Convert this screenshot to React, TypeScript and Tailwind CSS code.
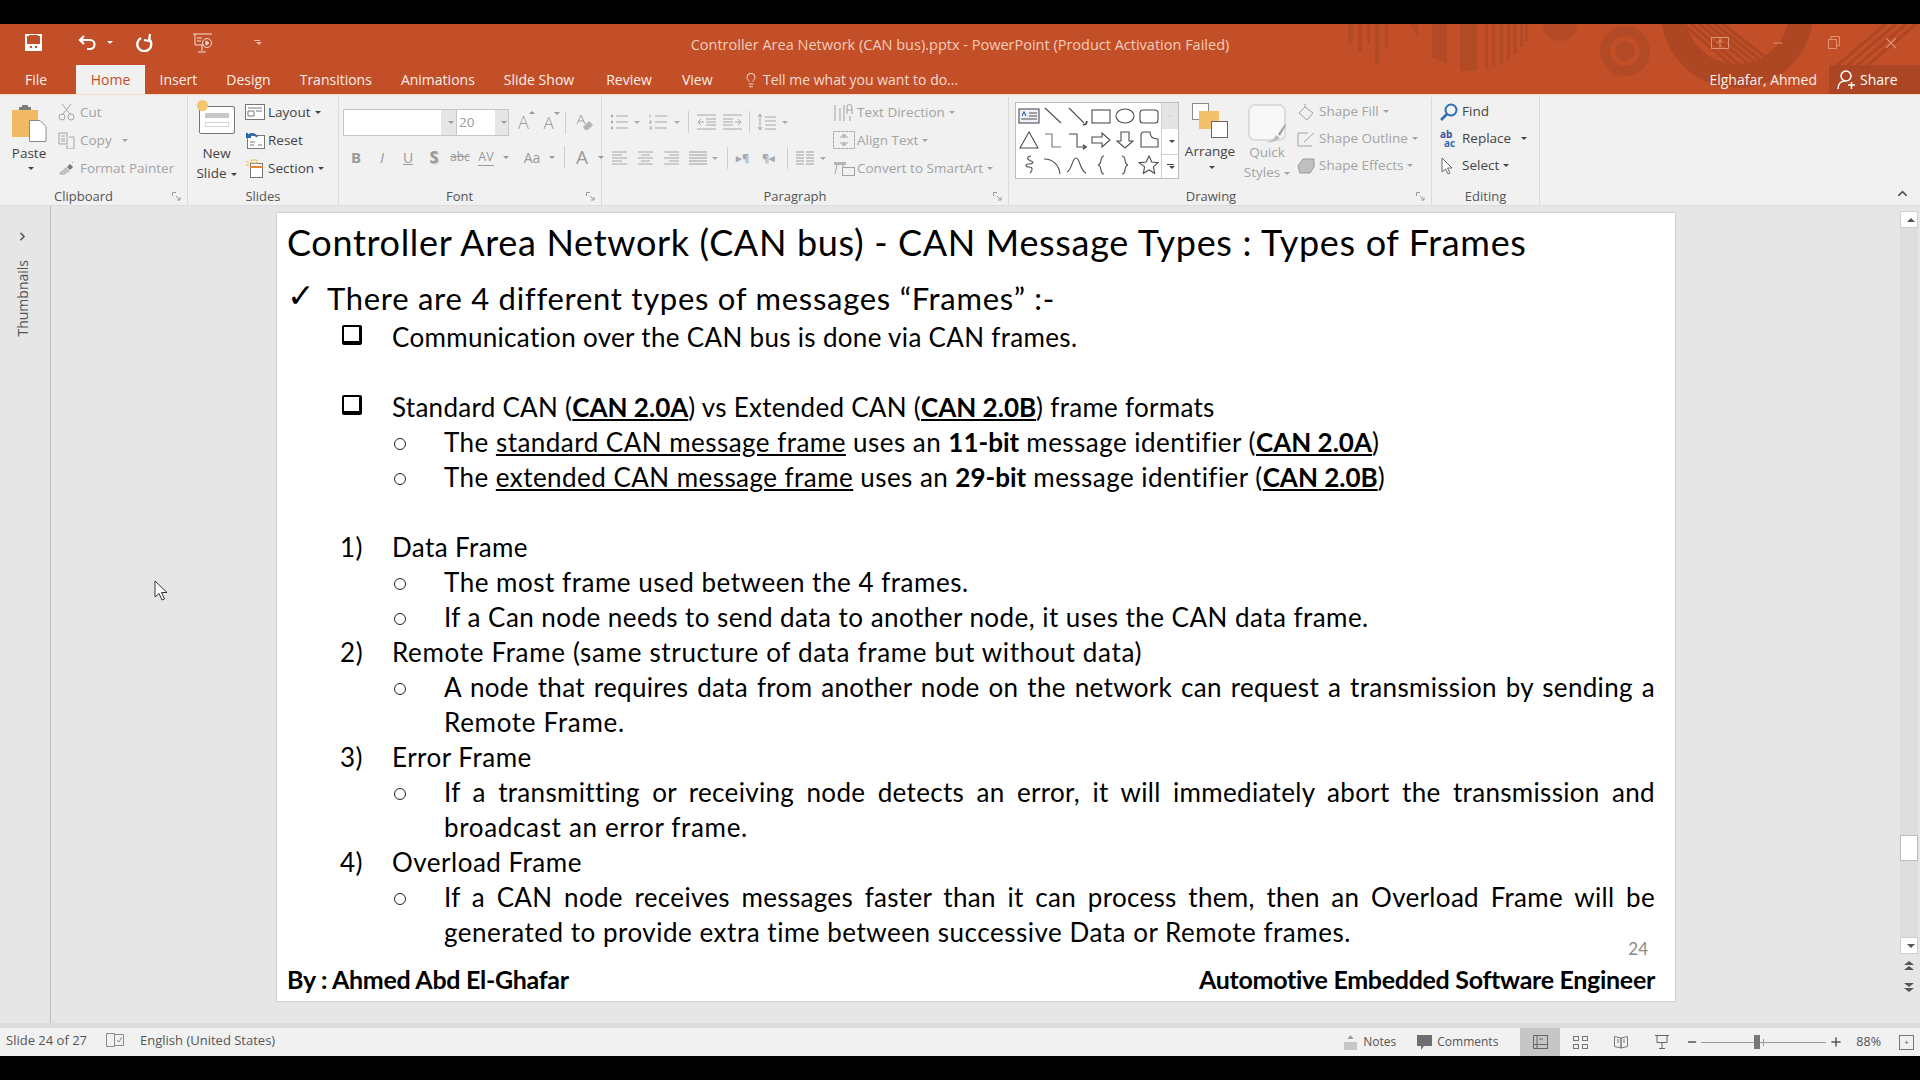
import type { ReactNode } from "react";
import { ChevronRight, ChevronUp, Lightbulb, Minus, Plus, X } from "lucide-react";

const tabs = [
  { name: "Insert", className: "" },
  { name: "Design", className: "" },
  { name: "Transitions", className: "" },
  { name: "Animations", className: "" },
  { name: "Slide Show", className: "" },
  { name: "Review", className: "ml-[3px]" },
  { name: "View", className: "ml-[1px]" },
];

function Caret({ className = "" }: { className?: string }) {
  return <span className={`ml-1 inline-block h-0 w-0 border-x-[3px] border-t-[3px] border-x-transparent border-t-current align-middle ${className}`} />;
}

function Svg({ w, h, children, className = "" }: { w: number; h: number; children: ReactNode; className?: string }) {
  return (
    <svg width={w} height={h} viewBox={`0 0 ${w} ${h}`} className={`shrink-0 ${className}`} fill="none" stroke="currentColor" strokeWidth="1">
      {children}
    </svg>
  );
}

function RibbonRow({ icon, label, caret, dim, compact, slot = "w-[22px]", caretClass }: { icon: ReactNode; label: string; caret?: boolean; dim?: boolean; compact?: boolean; slot?: string; caretClass?: string }) {
  return (
    <div className={`flex items-center whitespace-nowrap ${compact ? "h-[27px]" : "h-[28px]"} ${dim ? "text-[#a3a3a3]" : "text-[#444444]"}`}>
      <span className={`flex shrink-0 items-center ${slot}`}>{icon}</span>
      {label}
      {caret && <Caret className={caretClass} />}
    </div>
  );
}

function Launcher() {
  return (
    <svg width="9" height="9" viewBox="0 0 9 9" className="absolute bottom-[4px] right-[6px] text-[#9a9a9a]" fill="none" stroke="currentColor">
      <path d="M.5 4V.5H4M4 4l4 4M8 5v3H5" />
    </svg>
  );
}

function Group({ w, label, children, launcher, labelPad = "" }: { w: string; label: string; children: ReactNode; launcher?: boolean; labelPad?: string }) {
  return (
    <div className={`relative flex h-[108px] shrink-0 flex-col border-r border-[#dadada] ${w}`}>
      <div className="flex min-h-0 flex-1">{children}</div>
      <div className={`text-center text-[13px] leading-[18px] text-[#555555] ${labelPad}`}>{label}</div>
      {launcher && <Launcher />}
    </div>
  );
}

function Sep({ className = "" }: { className?: string }) {
  return <span className={`h-[22px] border-l border-[#cfcfcf] ${className}`} />;
}

function ListIcon({ numbered }: { numbered?: boolean }) {
  return (
    <Svg w={18} h={16} className="text-[#a8a8a8]">
      <path d="M6 2h12M6 8h12M6 14h12" />
      {numbered ? <path d="M1 .5v3M.5 7h2l-2 2h2M.5 13h2v2h-2" /> : <path d="M1 2h2M1 8h2M1 14h2" strokeWidth="2.4" />}
    </Svg>
  );
}

function IndentIcon({ flip }: { flip?: boolean }) {
  return (
    <Svg w={19} h={16} className={`text-[#a8a8a8] ${flip ? "-scale-x-100" : ""}`}>
      <path d="M0 1h19M9 5h10M9 8h10M9 11h10M0 15h19M7 8H1M4 5L1 8l3 3" />
    </Svg>
  );
}

function AlignIcon({ kind }: { kind: "left" | "center" | "right" | "justify" | "columns" }) {
  const rows = [2, 5, 8, 11, 14];
  return (
    <Svg w={kind === "justify" || kind === "columns" ? 18 : 15} h={16} className={kind === "justify" || kind === "columns" ? "text-[#9c9c9c]" : "text-[#cccccc]"}>
      {kind === "columns" && rows.map((y) => <path key={y} d={`M0 ${y}h8M10 ${y}h8`} />)}
      {kind === "justify" && rows.map((y) => <path key={y} d={`M0 ${y}h18`} />)}
      {kind === "left" && rows.map((y, i) => <path key={y} strokeWidth="2" d={`M0 ${y}h${i % 2 ? 10 : 15}`} />)}
      {kind === "center" && rows.map((y, i) => <path key={y} strokeWidth="2" d={i % 2 ? `M3 ${y}h9` : `M0 ${y}h15`} />)}
      {kind === "right" && rows.map((y, i) => <path key={y} strokeWidth="2" d={i % 2 ? `M5 ${y}h10` : `M0 ${y}h15`} />)}
    </Svg>
  );
}

function GrowA({ down, size }: { down?: boolean; size: number }) {
  return (
    <span className="relative w-[25px] text-center font-light text-[#9a9a9a]" style={{ fontSize: size }}>
      A
      <Caret className={`absolute right-[1px] top-[2px] ml-0 ${down ? "" : "rotate-180"}`} />
    </span>
  );
}

const gallery = [
  <g key="1"><rect x="1" y="5" width="20" height="14" fill="#eef2f8" /><path d="M11 9h8M11 12h8M3 15h16" /><path d="M4 12l2-4 2 4" stroke="#2a5fb0" /></g>,
  <path key="2" d="M3 4l16 15" />,
  <g key="3"><path d="M3 4l15 15" /><path d="M17 21l3-1 1-3" strokeWidth="1.8" /></g>,
  <rect key="4" x="2" y="6" width="18" height="13" />,
  <ellipse key="5" cx="11" cy="12" rx="9" ry="7" />,
  <rect key="6" x="2" y="6" width="18" height="13" rx="3" />,
  <path key="7" d="M11 4l9 16H2z" />,
  <path key="8" d="M3 6h7v13h9" stroke="#777" />,
  <g key="9"><path d="M3 6h8v13h7" /><path d="M17 17l3 2-3 2" strokeWidth="1.6" /></g>,
  <path key="10" d="M2 9h10V5l8 7-8 7v-4H2z" />,
  <path key="11" d="M7 4h8v9h4l-8 7-8-7h4z" />,
  <path key="12" d="M3 7c0-2 1-3 3-3h6c0 5 3 7 8 7v8H3z" />,
  <path key="13" d="M13 3c-6 1-3 4 0 5s2 3-2 3-4 3 0 3 4 3 1 6" />,
  <path key="14" d="M2 6c9 0 15 6 16 15" />,
  <path key="15" d="M1 19C6 17 6 5 10 5s4 13 10 15" />,
  <path key="16" d="M14 3c-5 0-1 8-6 9 5 1 1 9 6 9" />,
  <path key="17" d="M8 3c5 0 1 8 6 9-5 1-1 9-6 9" />,
  <path key="18" d="M11 3l2.800 6 6.200.7-4.600 4.200 1.300 6.400-5.700-3.300-5.700 3.300 1.300-6.400L1 9.700 8.200 9z" />,
];

function Ribbon() {
  return (
    <div className="relative flex h-[112px] shrink-0 border-t border-[#fbd9c9] bg-[#f1f1f1] pt-[2px] text-[13.5px] shadow-[inset_0_-1px_0_#dddddd]">
      <Group w="w-[188px]" label="Clipboard" launcher labelPad="pr-[20px]">
        <div className="flex w-[58px] flex-col items-center text-[#444444]">
          <Svg w={36} h={37} className="mt-[8px]">
            <path d="M1 5h26v27H1z" fill="#f2b965" stroke="none" />
            <path d="M8 5h12V2h-3V0h-6v2H8z" fill="#7d7d7d" stroke="none" />
            <path d="M18.500 15.500H29l6 6v15H18.500z" fill="#fff" stroke="#8a8a8a" />
          </Svg>
          <span className="mt-[2px] leading-[18px]">Paste</span>
          <Caret className="ml-0 mt-[5px]" />
        </div>
        <div className="pt-[1px]">
          <RibbonRow dim label="Cut" icon={
            <Svg w={17} h={18}><circle cx="4" cy="14" r="3" /><circle cx="13" cy="14" r="3" /><path d="M5 11L13 1M12 11L4 1" /></Svg>
          } />
          <RibbonRow dim caret caretClass="ml-[10px]" label="Copy" icon={
            <Svg w={17} h={18}><path d="M1 2h8v11H1zM3 5h4M3 8h4M3 10h4M11 6h5v12h-7v-4" /></Svg>
          } />
          <RibbonRow dim label="Format Painter" icon={
            <Svg w={17} h={14}><path d="M1 12l7-6 4 4-6 4H2z" fill="#c2c2c2" stroke="none" /><path d="M9 6l3-3 3 3-3 3z" fill="#777" stroke="none" /><path d="M14 1l1 1" /></Svg>
          } />
        </div>
      </Group>

      <Group w="w-[151px]" label="Slides">
        <div className="flex w-[57px] flex-col items-center text-[#444444]">
          <span className="relative mt-[9px] h-[28px] w-[36px] shrink-0 rounded-[2px] border border-[#777777] bg-white">
            <span className="absolute left-[5px] right-[5px] top-[6px] h-[5px] bg-[#c8c8c8]" />
            <span className="absolute left-[5px] right-[5px] top-[15px] h-[5px] border border-[#d6d6d6]" />
            <span className="absolute -left-[3px] -top-[7px] h-[11px] w-[11px] rounded-full bg-[#f4c66e]" />
          </span>
          <span className="mt-[9px] leading-[20px]">New</span>
          <span className="whitespace-nowrap leading-[20px]">Slide<Caret /></span>
        </div>
        <div className="pt-[1px]">
          <RibbonRow caret slot="w-[23px]" label="Layout" icon={
            <Svg w={20} h={16} className="text-[#777777]"><rect x=".5" y=".5" width="19" height="15" fill="#fff" /><path d="M3 4h14M3 7h6v5H3zM11 7h6" /></Svg>
          } />
          <RibbonRow slot="w-[23px]" label="Reset" icon={
            <Svg w={20} h={17} className="text-[#777777]"><rect x="2.500" y="3.500" width="17" height="13" fill="#fff" /><path d="M5 10h5M5 13h4M13 13h4" /><path d="M2 5c3-4 7-4 10 0M2 1v4h4" stroke="#2565ae" strokeWidth="2" /></Svg>
          } />
          <RibbonRow caret slot="w-[23px]" label="Section" icon={
            <Svg w={20} h={19}><rect x="5.500" y="4.500" width="12" height="14" fill="#fff" stroke="#777" /><path d="M5 8h13" stroke="#e0843b" strokeWidth="2" /><path d="M6 1h6v3H6zM1 2l3 2M1 6h3" stroke="#f0b656" /></Svg>
          } />
        </div>
      </Group>

      <Group w="w-[263px]" label="Font" launcher labelPad="pr-[21px]">
        <div className="flex flex-col pl-[4px] pt-[12px]">
          <div className="flex items-center text-[#9a9a9a]">
            <div className="flex h-[27px] w-[113px] border border-r-0 border-[#c6c6c6] bg-white">
              <span className="flex-1" />
              <span className="flex w-[15px] items-center justify-center bg-[#e6e6e6]"><Caret className="ml-0" /></span>
            </div>
            <div className="flex h-[27px] w-[53px] items-center border border-[#c6c6c6] bg-white pl-[2px]">
              <span className="flex-1">20</span>
              <span className="flex h-full w-[13px] items-center justify-center bg-[#e6e6e6]"><Caret className="ml-0" /></span>
            </div>
            <span className="ml-[2px]" />
            <GrowA size={18} />
            <GrowA size={17} down />
            <Sep className="ml-[4px]" />
            <Svg w={17} h={18} className="ml-[10px] text-[#a3a3a3]">
              <path d="M1 10L5 1l4 9M2.500 7h5" />
              <path d="M7 13l6-6 4 4-5 5H9z" fill="#b5b5b5" stroke="none" />
            </Svg>
          </div>
          <div className="mt-[9px] flex h-[24px] items-center text-[#9a9a9a]">
            <span className="w-[26px] text-center text-[15px] font-bold">B</span>
            <span className="w-[26px] text-center text-[15px] italic">I</span>
            <span className="w-[26px] text-center text-[14px] underline">U</span>
            <span className="w-[26px] text-center text-[16px] font-bold [text-shadow:1px_1px_1px_#bbb]">S</span>
            <span className="w-[26px] text-center text-[12px] line-through">abc</span>
            <span className="w-[26px] text-center text-[12.5px] leading-[14px]"><span className="border-b border-[#9a9a9a]">AV</span></span>
            <Caret className="ml-0 mr-[10px]" />
            <span className="w-[26px] text-center text-[14px]">Aa</span>
            <Caret className="ml-0" />
            <Sep className="ml-[9px]" />
            <span className="ml-[6px] w-[22px] text-center text-[19px] leading-[22px]">A</span>
            <Caret className="ml-[5px]" />
          </div>
        </div>
      </Group>

      <Group w="w-[407px]" label="Paragraph" launcher labelPad="pr-[20px]">
        <div className="flex w-[231px] flex-col pl-[8px] pt-[14px] text-[#a8a8a8]">
          <div className="flex h-[22px] items-center">
            <ListIcon /><Caret className="ml-[6px] mr-[9px]" />
            <ListIcon numbered /><Caret className="ml-[7px] mr-[8px]" />
            <Sep className="mr-[8px]" />
            <IndentIcon />
            <span className="w-[7px]" />
            <IndentIcon flip />
            <Sep className="ml-[7px] mr-[7px]" />
            <Svg w={19} h={18}>
              <path d="M3 1v16M1 4l2-3 2 3M1 14l2 3 2-3M8 4h11M8 8h11M8 12h11M8 16h11" />
            </Svg>
            <Caret className="ml-[6px]" />
          </div>
          <div className="mt-[14px] flex h-[22px] items-center pl-[2px]">
            <AlignIcon kind="left" />
            <span className="w-[11px]" />
            <AlignIcon kind="center" />
            <span className="w-[11px]" />
            <AlignIcon kind="right" />
            <span className="w-[10px]" />
            <AlignIcon kind="justify" />
            <Caret className="ml-[5px] mr-[9px]" />
            <Sep className="mr-[8px]" />
            <span className="w-[26px] text-[11px] font-bold">▸¶</span>
            <span className="w-[25px] text-[11px] font-bold">¶◂</span>
            <Sep className="mr-[8px]" />
            <AlignIcon kind="columns" />
            <Caret className="ml-[6px]" />
          </div>
        </div>
        <div className="pt-[1px]">
          <RibbonRow dim caret slot="w-[24px]" label="Text Direction" icon={
            <Svg w={21} h={20}><path d="M2 3v16M7 6v13M11 3v16M14 12V5a2.500 2.500 0 0 1 5 0v7M14 8h5M17 14v5" /></Svg>
          } />
          <RibbonRow dim caret slot="w-[24px]" label="Align Text" icon={
            <Svg w={22} h={18}><rect x=".5" y=".5" width="21" height="17" strokeDasharray="3 1" /><path d="M7 6h8M7 12h8M11 3v4M11 11v4M9 5l2-2 2 2M9 13l2 2 2-2" /></Svg>
          } />
          <RibbonRow dim caret slot="w-[24px]" label="Convert to SmartArt" icon={
            <Svg w={22} h={16}><path d="M1 2h12v3H1z" fill="#b5b5b5" stroke="none" /><path d="M4 5l-2 9M10 5v3" /><rect x="9.500" y="7.500" width="12" height="8" /></Svg>
          } />
        </div>
      </Group>

      <Group w="w-[423px]" label="Drawing" launcher labelPad="pr-[18px]">
        <div className="ml-[6px] mt-[5px] flex h-[77px] w-[164px] border border-[#bdbdbd] bg-white">
          <div className="grid flex-1 grid-cols-6 grid-rows-3 py-[1px] pl-[1px]">
            {gallery.map((shape, i) => (
              <svg key={i} viewBox="0 0 22 24" className="h-[24px] w-[24px]" fill="none" stroke="#4d4d4d" strokeWidth="1.100">
                {shape}
              </svg>
            ))}
          </div>
          <div className="flex w-[17px] flex-col border-l border-[#d0d0d0] text-[#444444]">
            <span className="flex h-[27px] items-center justify-center bg-[#e4e4e4] text-[#bdbdbd]"><Minus size={6} /></span>
            <span className="flex h-[25px] items-center justify-center"><Caret className="ml-0" /></span>
            <span className="flex h-[25px] flex-col items-center justify-center border-t border-[#d0d0d0]"><span className="mb-[1px] w-[7px] border-t border-[#444444]" /><Caret className="ml-0" /></span>
          </div>
        </div>
        <div className="flex w-[62px] flex-col items-center text-[#444444]">
          <span className="relative mt-[6px] h-[35px] w-[36px] shrink-0">
            <span className="absolute left-0 top-0 h-[17px] w-[17px] border border-[#8a8a8a] bg-white" />
            <span className="absolute left-[7px] top-[8px] h-[18px] w-[20px] bg-[#f4c16b]" />
            <span className="absolute bottom-0 right-0 h-[17px] w-[17px] border border-[#666666] bg-white" />
          </span>
          <span className="mt-[4px] leading-[18px]">Arrange</span>
          <Caret className="ml-0 mt-[6px]" />
        </div>
        <div className="flex w-[52px] flex-col items-center text-[#a3a3a3]">
          <span className="relative mt-[7px] h-[37px] w-[38px] shrink-0 rounded-[7px] border-2 border-[#dcdcdc] bg-[#f8f8f8]">
            <Svg w={22} h={22} className="absolute -bottom-[4px] -right-[3px] text-[#a9a9a9]">
              <path d="M1 21c6-1 8-3 10-7l4 3c-3 3-8 5-14 4z" fill="#bdbdbd" stroke="none" />
              <path d="M13 13l7-10 1 1-6 11z" fill="#a0a0a0" stroke="none" />
            </Svg>
          </span>
          <span className="mt-[1px] leading-[20px]">Quick</span>
          <span className="whitespace-nowrap leading-[20px]">Styles<Caret /></span>
        </div>
        <div className="pl-[4px] pt-[1px]">
          <RibbonRow dim compact caret label="Shape Fill" icon={
            <Svg w={17} h={18}><path d="M8 4l8 6-6 7-8-7zM8 4V1" /></Svg>
          } />
          <RibbonRow dim compact caret label="Shape Outline" icon={
            <Svg w={18} h={16}><path d="M15 15H1V2h10M7 11l10-9" /></Svg>
          } />
          <RibbonRow dim compact caret label="Shape Effects" icon={
            <Svg w={18} h={16}><path d="M1 8l5-7h11v8l-4 6H3z" fill="#c0c0c0" stroke="#999" /></Svg>
          } />
        </div>
      </Group>

      <Group w="w-[108px]" label="Editing">
        <div className="pl-[8px] pt-[1px]">
          <RibbonRow compact label="Find" icon={
            <Svg w={18} h={18} className="text-[#2a6db5]"><circle cx="11" cy="7" r="5.500" strokeWidth="2" /><path d="M7 11l-6 6" strokeWidth="2.500" /></Svg>
          } />
          <RibbonRow compact label="Replace" caret caretClass="ml-[10px]" icon={
            <span className="text-[10px] font-bold leading-[9px] text-[#3c4f9e]">ab<br /><span className="ml-[4px] text-[#2a6db5]">ac</span></span>
          } />
          <RibbonRow compact label="Select" caret icon={
            <svg width="14" height="18" viewBox="0 0 14 18" fill="#fff" stroke="#666"><path d="M2 1v14l3.500-3 2.500 5 2-1-2.500-5H12z" /></svg>
          } />
        </div>
      </Group>

      <ChevronUp size={15} strokeWidth={2.500} className="absolute bottom-[5px] right-[10px] text-[#555555]" />
    </div>
  );
}

function TitleArt() {
  return (
    <svg viewBox="0 0 600 70" className="absolute right-0 top-0 h-[70px] w-[600px]" fill="#b34a26">
      <path d="M28 0h5v20h-5zM38 0h4v28h-4zM47 0h3v20h-3zM55 0h4v40h-4zM65 0h3v25h-3zM90 0h8v14zM112 0h15v40l-15-7zM140 0h17v47h-17z" />
      <path d="M165 0h3v45h-3zM172 0h3v42h-3zM180 0h3v40h-3zM187 0h3v37h-3zM193 0h4v30h-4zM200 0h3v23h-3zM205 0h3v17h-3z" />
      <circle cx="240" cy="0" r="17" />
      <circle cx="305" cy="27" r="20" fill="none" stroke="#b34a26" strokeWidth="10" />
      <circle cx="305" cy="27" r="10" />
      <circle cx="417" cy="-12" r="64" fill="none" stroke="#ad4723" strokeWidth="24" />
      <g stroke="#ad4723" strokeWidth="3" fill="none">
        <path d="M363 0l52 44M371 0l52 44M379 0l52 42M387 0l50 40M395 0l48 38M403 0l46 36" />
        <path d="M512 46L566 0M522 46L576 0M532 46L586 0M542 46L596 0" />
      </g>
    </svg>
  );
}

function Header() {
  return (
    <header className="relative flex h-[70px] shrink-0 flex-col bg-[#c24f28] text-white">
      <TitleArt />
      <div className="relative grid h-[41px] grid-cols-[1fr_auto_1fr] items-center pb-[4px]">
        <div className="flex items-center pl-[25px]">
          <Svg w={17} h={17}>
            <path d="M1 1h15v15H1z" strokeWidth="2" />
            <path d="M4 1h9v6H4z" fill="#c24f28" stroke="none" />
            <path d="M2 10h13v6H2z" fill="#fff" stroke="none" />
            <path d="M5 13h2M10 13h2" stroke="#c24f28" strokeWidth="2" />
          </Svg>
          <Svg w={18} h={15} className="ml-[36px]">
            <path d="M2 5h10a4.500 4.500 0 0 1 0 9H9M6 1L2 5l4 4" strokeWidth="2.200" />
          </Svg>
          <Caret className="ml-[11px]" />
          <Svg w={18} h={18} className="ml-[22px]">
            <path d="M6 4a7 7 0 1 0 8 1" strokeWidth="2.400" />
            <path d="M15 0l-1 7-5-1" strokeWidth="2.200" />
          </Svg>
          <Svg w={22} h={20} className="ml-[39px] text-[#f5ddd0]">
            <path d="M1 1h19M3 1v11h9M10 12v6M6 19h8" />
            <path d="M5 5h5M5 8h4" />
            <circle cx="15" cy="10" r="4.500" />
            <path d="M14 8l3 2-3 2z" fill="currentColor" />
          </Svg>
          <span className="ml-[38px] flex flex-col items-center text-[#eebca6]">
            <span className="mb-[1px] w-[6px] border-t border-current" />
            <Caret className="ml-0" />
          </span>
        </div>
        <div className="pt-[4px] text-[14.5px] text-[#f4ccb9]">Controller Area Network (CAN bus).pptx - PowerPoint (Product Activation Failed)</div>
        <div className="flex items-center justify-end text-[#df9274]">
          <Svg w={18} h={12}><rect x=".5" y=".5" width="17" height="11" /><path d="M9 1v10M6 6l3-3 3 3" /></Svg>
          <Minus size={14} className="ml-[42px]" />
          <Svg w={12} h={13} className="ml-[43px]"><path d="M.5 3.500h8v9h-8zM3 3V.500h8.500v9H9" /></Svg>
          <X size={18} strokeWidth={1.5} className="ml-[42px] mr-[20px]" />
        </div>
      </div>
      <div className="relative flex h-[29px] items-stretch text-[14px] text-[#fbeee8]">
        <span className="flex w-[76px] items-center justify-center pr-[4px]">File</span>
        <span className="flex w-[69px] items-center justify-center bg-[#f1f1f1] text-[#c24f28]">Home</span>
        {tabs.map((tab) => (
          <span key={tab.name} className={`flex items-center px-[14.5px] ${tab.className}`}>{tab.name}</span>
        ))}
        <span className="flex items-center gap-[4px] pl-[16px] text-[#f6dccf]">
          <Lightbulb size={16} strokeWidth={1.500} />
          Tell me what you want to do...
        </span>
        <span className="ml-auto flex items-center pr-[12px]">Elghafar, Ahmed</span>
        <span className="flex w-[91px] items-center gap-[4px] bg-[#ab4523] pl-[8px] text-white">
          <Svg w={19} h={20}>
            <circle cx="9" cy="6" r="5" strokeWidth="1.500" />
            <path d="M1 19c0-5 3-8 7-8M11 15h7M14.500 12v7" strokeWidth="1.500" />
          </Svg>
          Share
        </span>
      </div>
    </header>
  );
}

function Line({ children, bullet, level = 1, just, className = "" }: { children: ReactNode; bullet?: ReactNode; level?: 1 | 2; just?: boolean; className?: string }) {
  return (
    <div className={`flex h-[35px] items-center whitespace-nowrap ${level === 1 ? "pl-[53px]" : "pl-[113px]"} ${className}`}>
      <span className={`flex shrink-0 items-center ${level === 1 ? "w-[52px]" : "w-[44px]"}`}>{bullet}</span>
      <span className={`flex-1 ${just ? "[text-align-last:justify]" : ""}`}>{children}</span>
    </div>
  );
}

const Box = () => <span className="-mt-[4px] ml-[2px] block h-[20px] w-[20px] rounded-[2px] border-2 border-b-[4px] border-r-[3px] border-black" />;
const Dot = () => <span className="-ml-[6px] mt-[4px] block h-[12px] w-[12px] rounded-full border-[1.5px] border-[#222222]" />;
const Strong = ({ children }: { children: ReactNode }) => <b className="font-bold tracking-[0px] underline underline-offset-2">{children}</b>;

function Slide() {
  return (
    <div className="relative h-[790px] w-[1400px] border border-[#d2d2d2] bg-white pl-[10px] pr-[20px] font-['Lato'] text-[26px] tracking-[0.32px] text-black">
      <h1 className="mt-[4px] h-[50px] text-[36px] leading-[50px] tracking-[0.67px]">Controller Area Network (CAN bus) - CAN Message Types : Types of Frames</h1>
      <div className="mt-[12px] flex h-[38px] items-center whitespace-nowrap text-[31px] tracking-[0.72px]">
        <span className="-mt-[6px] w-[40px] font-['DejaVu_Sans'] text-[33px] font-bold leading-none">✓</span>
        There are 4 different types of messages “Frames” :-
      </div>
      <div className="mt-[2.5px]">
        <Line bullet={<Box />}>Communication over the CAN bus is done via CAN frames.</Line>
        <div className="h-[35px]" />
        <Line bullet={<Box />} className="tracking-[0.28px]">Standard CAN (<Strong>CAN 2.0A</Strong>) vs Extended CAN (<Strong>CAN 2.0B</Strong>) frame formats</Line>
        <Line level={2} bullet={<Dot />} className="tracking-[0.47px]">The <u className="underline-offset-2">standard CAN message frame</u> uses an <b className="tracking-[0px]">11-bit</b> message identifier (<Strong>CAN 2.0A</Strong>)</Line>
        <Line level={2} bullet={<Dot />} className="tracking-[0.45px]">The <u className="underline-offset-2">extended CAN message frame</u> uses an <b className="tracking-[0px]">29-bit</b> message identifier (<Strong>CAN 2.0B</Strong>)</Line>
        <div className="h-[35px]" />
        <Line bullet="1)" className="tracking-[0.4px]">Data Frame</Line>
        <Line level={2} bullet={<Dot />} className="tracking-[0.52px]">The most frame used between the 4 frames.</Line>
        <Line level={2} bullet={<Dot />} className="tracking-[0.46px]">If a Can node needs to send data to another node, it uses the CAN data frame.</Line>
        <Line bullet="2)" className="tracking-[0.67px]">Remote Frame (same structure of data frame but without data)</Line>
        <Line level={2} just bullet={<Dot />}>A node that requires data from another node on the network can request a transmission by sending a</Line>
        <Line level={2} className="tracking-[0.7px]">Remote Frame.</Line>
        <Line bullet="3)" className="tracking-[0.5px]">Error Frame</Line>
        <Line level={2} just bullet={<Dot />}>If a transmitting or receiving node detects an error, it will immediately abort the transmission and</Line>
        <Line level={2} className="tracking-[0.66px]">broadcast an error frame.</Line>
        <Line bullet="4)" className="tracking-[0.5px]">Overload Frame</Line>
        <Line level={2} just bullet={<Dot />}>If a CAN node receives messages faster than it can process them, then an Overload Frame will be</Line>
        <Line level={2} className="tracking-[0.52px]">generated to provide extra time between successive Data or Remote frames.</Line>
      </div>
      <div className="mt-[11px] flex justify-between text-[25px] font-bold tracking-[-0.3px]">
        <span>By : Ahmed Abd El-Ghafar</span>
        <span>Automotive Embedded Software Engineer</span>
      </div>
      <span className="absolute right-[27px] top-[723px] text-[17px] tracking-normal text-[#8a8a8a]">24</span>
    </div>
  );
}

function Scrollbar() {
  return (
    <div className="flex w-[20px] shrink-0 flex-col items-center pr-[2px] pt-[5px] text-[#555555]">
      <div className="flex h-[743px] w-[18px] flex-col bg-[#dedede]">
        <span className="flex h-[17px] w-[18px] items-center justify-center border border-[#d0d0d0] bg-white"><Caret className="ml-0 rotate-180 border-x-[4px] border-t-[4px]" /></span>
        <div className="mt-[607px] h-[26px] w-[18px] border border-[#bdbdbd] bg-white" />
        <div className="mt-auto flex h-[17px] w-[18px] items-center justify-center border border-[#d0d0d0] bg-white"><Caret className="ml-0 border-x-[4px] border-t-[4px]" /></div>
      </div>
      <Svg w={10} h={10} className="mt-[7px]"><path d="M0 4l5-4 5 4zM0 9l5-4 5 4z" fill="currentColor" stroke="none" /></Svg>
      <Svg w={10} h={10} className="mt-[11px]"><path d="M0 1h10L5 5zM0 6h10l-5 4z" fill="currentColor" stroke="none" /></Svg>
    </div>
  );
}

function StatusBar() {
  return (
    <footer className="flex h-[33px] shrink-0 items-center border-t-[5px] border-[#dcdcdc] bg-[#f1f1f1] text-[13px] text-[#555555]">
      <span className="pb-[3px] pl-[6px]">Slide 24 of 27</span>
      <Svg w={18} h={15} className="mb-[3px] ml-[19px] text-[#8a8a8a]"><path d="M.5.5h8v13h-8zM8.500 1.500h9v11h-9M11 7l2 2 3-5" /></Svg>
      <span className="ml-[16px] pb-[3px]">English (United States)</span>
      <div className="ml-auto flex h-full items-center text-[12px]">
        <Svg w={13} h={15} className="mr-[6px]"><path d="M0 7h13v8H0z" fill="#c6c6c6" stroke="none" /><path d="M6.500 0l3 4h-6z" fill="#9c9c9c" stroke="none" /></Svg>
        <span className="mr-[21px]">Notes</span>
        <Svg w={15} h={15} className="mr-[5px]"><path d="M0 0h15v11H7l-3 4v-4H0z" fill="#6f6f6f" stroke="none" /></Svg>
        <span className="mr-[22px]">Comments</span>
        <span className="flex h-full w-[40px] items-center justify-center bg-[#c6c6c6]">
          <Svg w={15} h={14} className="text-[#666666]"><path d="M.5.500h14v13H.500zM.5 9.500h14M4 .5v13M6 4h4" /></Svg>
        </span>
        <span className="flex w-[40px] justify-center"><span className="grid grid-cols-2 gap-[3px]">{[0, 1, 2, 3].map((n) => <span key={n} className="h-[5px] w-[6px] border border-[#777777]" />)}</span></span>
        <span className="flex w-[41px] justify-center">
          <Svg w={14} h={14} className="text-[#777777]"><path d="M.5 1.500L7 3v10L.5 11.500zM13.500 1.500L7 3v10l6.500-1.500zM3 5h2M3 7h2M9 5h2M9 7h2" /></Svg>
        </span>
        <span className="flex w-[41px] justify-center">
          <Svg w={14} h={14} className="text-[#666666]"><path d="M0 .5h14M2 .5v7h10v-7M7 8v5M4 13.500h6" /></Svg>
        </span>
        <Minus size={12} strokeWidth={3} className="ml-[4px]" />
        <span className="relative ml-[3px] mr-[3px] flex h-[1px] w-[125px] items-center bg-[#9a9a9a]">
          <span className="absolute left-[53px] h-[14px] w-[6px] bg-[#777777]" />
          <span className="absolute left-[62px] h-[7px] border-l border-[#9a9a9a]" />
        </span>
        <Plus size={14} strokeWidth={2.500} />
        <span className="ml-[13px] text-[12.5px]">88%</span>
        <span className="ml-[18px] mr-[6px] flex h-[15px] w-[15px] items-center justify-center border border-[#777777] text-[8px] leading-none">+</span>
      </div>
    </footer>
  );
}

export default function App() {
  return (
    <div className="relative flex h-[1080px] w-[1920px] flex-col overflow-hidden bg-black pb-[24px] pt-[24px] font-['Open_Sans',sans-serif]">
      <Header />
      <Ribbon />
      <main className="flex min-h-0 flex-1 bg-[#e6e6e6]">
        <aside className="flex w-[51px] shrink-0 flex-col items-center border-r border-[#bdbdbd] pr-[5px] pt-[24px] text-[#555555]">
          <ChevronRight size={13} strokeWidth={3} />
          <span className="mt-[17px] rotate-180 text-[14px] [writing-mode:vertical-rl]">Thumbnails</span>
        </aside>
        <div className="flex-1 pl-[225px] pt-[6px]">
          <Slide />
        </div>
        <Scrollbar />
      </main>
      <StatusBar />
      <svg width="14" height="22" viewBox="0 0 14 22" className="absolute left-[154px] top-[580px]" fill="#fff" stroke="#333">
        <path d="M1 1v16l4-3.500 3 6.500 2.500-1-3-6.500H13z" />
      </svg>
    </div>
  );
}
